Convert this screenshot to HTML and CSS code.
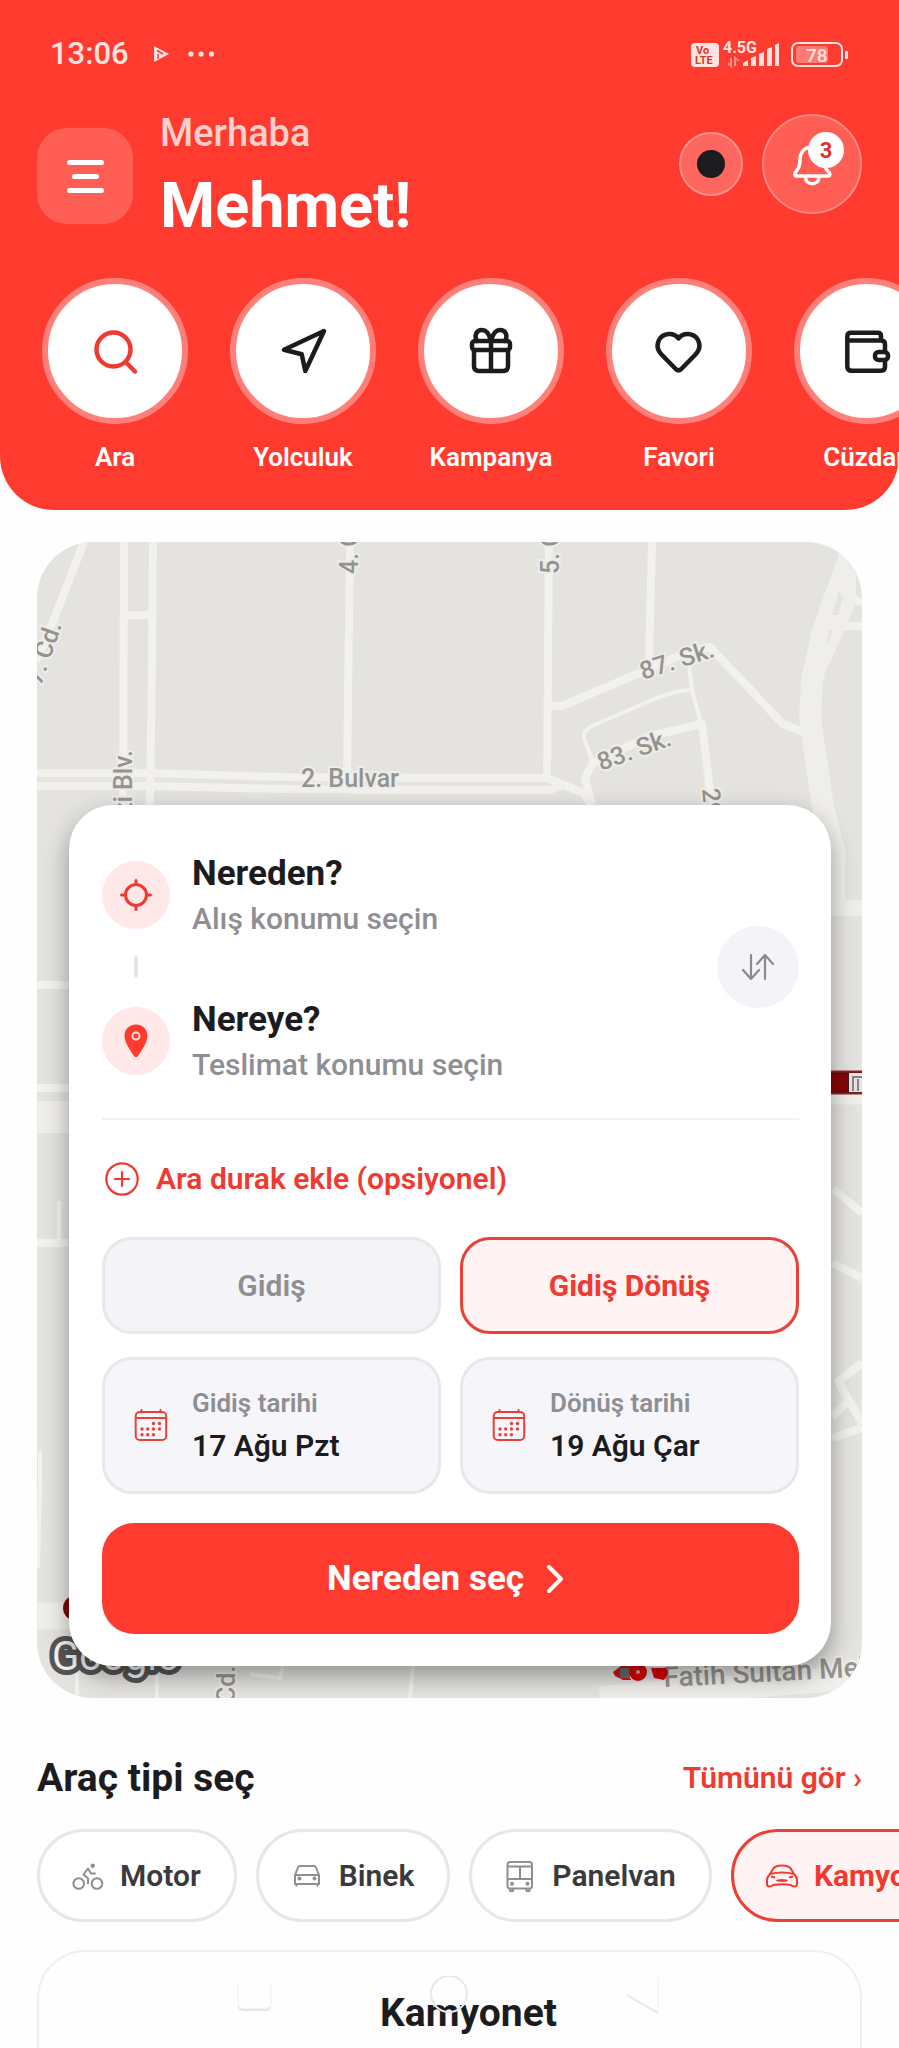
FILE: index.html
```html
<!DOCTYPE html>
<html lang="tr">
<head>
  <meta charset="UTF-8">
  <meta name="viewport" content="width=device-width, initial-scale=1.0">
  <title>Nereden Nereye</title>
  <link rel="stylesheet" href="styles.css">
</head>
<body>
  <header class="header">
    <div class="status-bar">
      <div class="status-left">
        <span class="time">13:06</span>
        <svg width="16" height="18" viewBox="0 0 16 18">
          <path d="M1 1l15 8L1 17z" fill="#ffe3e1"/>
          <path d="M4 5.500l6 3.500M5 9v5" stroke="#ff3b30" stroke-width="1.500"/>
        </svg>
        <svg width="28" height="8" viewBox="0 0 28 8" fill="#ffe3e1">
          <circle cx="4" cy="4" r="2.600"/><circle cx="14" cy="4" r="2.600"/><circle cx="24.500" cy="4" r="2.600"/>
        </svg>
      </div>
      <svg class="status-icons" width="158" height="30" viewBox="691 38 158 30">
        <rect x="691" y="42" width="28" height="24" rx="4" fill="#ffe3e1"/>
        <text x="696" y="53" font-size="11" font-weight="700" fill="#e0352b">Vo</text>
        <text x="695" y="63" font-size="11" font-weight="700" fill="#e0352b">LTE</text>
        <text x="723" y="52" font-size="16" font-weight="700" fill="#ffe3e1">4.5G</text>
        <path d="M731 57v8l-3-3M735 65v-8l4 3" fill="none" stroke="#ff9089" stroke-width="2"/>
        <path d="M743 65v-3l5-3v6zM751 65v-8l5-2v10zM759 65V53l5-2v14zM767 65V48l5-2v19zM775 65V44l4-2v23z" fill="#ffe3e1"/>
        <rect x="792" y="42" width="50" height="23" rx="6" fill="none" stroke="#ffe3e1" stroke-width="2"/>
        <rect x="796" y="45" width="32" height="17" rx="3" fill="#ff7a73"/>
        <text x="806" y="61" font-size="19" font-weight="500" fill="#ffe3e1">78</text>
        <rect x="845" y="50" width="3" height="8" rx="1" fill="#ffe3e1"/>
      </svg>
    </div>

    <div class="top-row">
      <button class="menu-btn" aria-label="Menü"><span></span><span class="short"></span><span></span></button>
      <div class="greeting">
        <p class="hello">Merhaba</p>
        <h1 class="name">Mehmet!</h1>
      </div>
      <div class="top-actions">
        <button class="dot-btn" aria-label="Tema"></button>
        <button class="bell-btn" aria-label="Bildirimler">
          <svg width="44" height="44" viewBox="28 28 44 44" fill="none" stroke="#fff" stroke-width="3.500" stroke-linejoin="round" stroke-linecap="round">
            <path d="M50 33C41 33 38 40 38 46c0 7-2 9-5 13q-1.500 3 2 3h30.500q3.500 0 2-3c-3.500-4-5.500-6-5.500-13 0-6-3-13-12-13z"/>
            <path d="M43.500 63c0 9 13.500 9 13.500 0"/>
          </svg>
          <span class="badge">3</span>
        </button>
      </div>
    </div>

    <nav class="quick">
      <button class="quick-item">
        <span class="quick-icon active">
          <svg viewBox="0 0 48 48"><circle cx="22.500" cy="22.500" r="17"/><path d="M35 35.500l9 9"/></svg>
        </span>
        Ara
      </button>
      <button class="quick-item">
        <span class="quick-icon">
          <svg viewBox="0 0 48 48"><path d="M45 4L5 22.700l17.700 4.600L26.300 44z"/></svg>
        </span>
        Yolculuk
      </button>
      <button class="quick-item">
        <span class="quick-icon">
          <svg viewBox="0 0 48 48"><rect x="5" y="14" width="38" height="9" rx="3"/><path d="M7 24v15q0 5 5 5h24q5 0 5-5V24M24 14v30M24 14C22 6 19 3 15 3c-6 0-8 6-5 11M24 14c2-8 5-11 9-11 6 0 8 6 5 11"/></svg>
        </span>
        Kampanya
      </button>
      <button class="quick-item">
        <span class="quick-icon">
          <svg viewBox="0 0 48 48"><path d="M23.500 11.500C19 5 8 5.500 4 13c-3 6-1 11 3 15l14 14.300q2.500 2.200 5 0L40 28c4-4 6-9 3-15-4-7.500-15-8-19.500-1.500z"/></svg>
        </span>
        Favori
      </button>
      <button class="quick-item">
        <span class="quick-icon">
          <svg viewBox="0 0 48 48"><path d="M38 13V9q0-3.300-3.300-3.300H8Q4.300 5.700 4.300 9.400v30q0 4.300 4.300 4.300H38q4 0 4-4V33M4.300 13.500H38q4 0 4 4V25"/><rect x="32" y="25" width="13" height="8" rx="3.500"/></svg>
        </span>
        Cüzdan
      </button>
    </nav>
  </header>

  <main>
    <section class="map">
      <svg class="map-bg" viewBox="37 541 825 1156" preserveAspectRatio="xMidYMin slice">
        <rect x="37" y="541" width="825" height="1156" fill="#e4e3df"/>
        <!-- roads -->
        <g fill="none" stroke="#f2f1ec" stroke-width="8" stroke-linejoin="round">
          <path d="M84 541L52 623L36 660"/>
          <path d="M124 541L123 804M153 541L152 663L150 804M126 614H152"/>
          <path d="M350 541L347 777M549 541L547 780M652 541L649 663"/>
          <path d="M37 772H150L283 776L450 777H547L583 792L592 804"/>
          <path d="M37 785H150L283 788L450 789H550L562 784"/>
          <path d="M550 705H562L637 673L690 650L710 646L783 723L804 731"/>
          <path d="M592 804L585 777L593 762L650 735L702 723L710 790L715 807"/>
          <path d="M827 625H862M842 592L862 602"/>
          <path d="M833 1188L862 1212M832 1262L862 1277M862 1362L838 1380L862 1422M862 1427L832 1437M832 1416L848 1400"/>
          <path d="M37 984H69M37 1087H69M37 1242H69"/>
        </g>
        <g fill="none" stroke="#f2f1ec" stroke-width="4">
          <path d="M689 663L692 689L701 722M692 689Q670 690 650 700L592 725Q582 730 584 737L593 762"/>
          <path d="M59 1200V1240M40 1450V1480L38 1567M77 1665V1697M157 1665V1697M413 1665L410 1697M250 1673L280 1677L283 1665"/>
        </g>
        <g fill="none" stroke="#efeeea">
          <path d="M855 541L823 630L812 680L810 717L823 807L834 850V905" stroke-width="22"/>
          <path d="M850 570V600L822 665" stroke-width="12"/>
          <path d="M831 907H862" stroke-width="16"/>
          <path d="M831 1090H862M37 1615H75" stroke-width="27"/>
          <path d="M37 1116H69" stroke-width="32"/>
          <path d="M600 1697L862 1676" stroke-width="24"/>
        </g>
        <path d="M839 590l4 6-5 18h-6zM829 628l-2 18 6-16z" fill="#e4e3df"/>
        <!-- street names -->
        <g class="street">
          <text x="301" y="786">2. Bulvar</text>
          <text transform="translate(358 573) rotate(-90)">4. Cd.</text>
          <text transform="translate(559 573) rotate(-90)">5. Cd.</text>
          <text transform="translate(132 749) rotate(-90)" text-anchor="end">Gazi Blv.</text>
          <text transform="translate(62 624) rotate(-71)" text-anchor="end">7. Cd.</text>
          <text transform="translate(643 679) rotate(-18)">87. Sk.</text>
          <text transform="translate(601 770) rotate(-20)">83. Sk.</text>
          <text transform="translate(702 788) rotate(84)">29. Sk.</text>
          <text transform="translate(235 1702) rotate(-90)">Cd.</text>
          <text transform="translate(664 1686) rotate(-3)" font-size="28">Fatih Sultan Mehmet</text>
        </g>
        <!-- vehicles -->
        <g>
          <rect x="825" y="1070" width="37" height="23" fill="#3b1d1c"/>
          <rect x="828" y="1073" width="20" height="17" fill="#850508"/>
          <rect x="849" y="1072" width="13" height="19" fill="#e6e3e2"/>
          <path d="M862 1076H853V1090M858 1078V1090" fill="none" stroke="#8a8585" stroke-width="2"/>
          <path d="M831 1070.500H862M831 1092.500H862" stroke="#9c1c20" stroke-width="2"/>
          <ellipse cx="72" cy="1607" rx="9" ry="11" fill="#7d0307"/>
          <path d="M613 1671l8-6h10v14h-8l-8-4z" fill="#cf1516"/>
          <path d="M620 1667h10v10h-10z" fill="#6b6b6b"/>
          <rect x="630" y="1667" width="25" height="11" fill="#dcdada"/>
          <circle cx="638" cy="1671" r="9" fill="#d80306"/>
          <circle cx="638" cy="1671" r="2" fill="#f3a0a0"/>
          <path d="M651 1667h15q4 5-2 12l-10-2z" fill="#d80306"/>
        </g>
        <text class="google" x="52" y="1669">Google</text>
      </svg>

      <div class="trip-card">
        <div class="route">
          <button class="stop">
            <span class="stop-icon">
              <svg width="34" height="34" viewBox="0 0 34 34" fill="none" stroke="#f03a31" stroke-width="3" stroke-linecap="round">
                <circle cx="17" cy="17" r="10.500"/><path d="M17 2.500v4M17 27.500v4M2.500 17h4M27.500 17h4"/>
              </svg>
            </span>
            <span class="stop-text"><b>Nereden?</b><span>Alış konumu seçin</span></span>
          </button>
          <div class="connector"></div>
          <button class="stop">
            <span class="stop-icon">
              <svg width="24" height="34" viewBox="0 0 24 34">
                <path d="M12 0.500C5 0.500 0.500 5.500 0.500 12 0.500 18 6 26 10 32q2 2.500 4 0c4-6 9.500-14 9.500-20C23.500 5.500 19 0.500 12 0.500z" fill="#ff3b30"/>
                <circle cx="12" cy="12" r="3.500" fill="none" stroke="#ffe0de" stroke-width="2"/>
              </svg>
            </span>
            <span class="stop-text"><b>Nereye?</b><span>Teslimat konumu seçin</span></span>
          </button>
          <button class="swap-btn" aria-label="Değiştir">
            <svg width="34" height="28" viewBox="0 0 34 28" fill="none" stroke="#8a8a8e" stroke-width="2.200" stroke-linecap="round" stroke-linejoin="round">
              <path d="M10 2v24M2 17l8 9 8-9M24 26V2M16 11l8-9 8 9"/>
            </svg>
          </button>
        </div>

        <button class="add-stop">
          <svg width="34" height="34" viewBox="0 0 34 34" fill="none" stroke="#f03a31" stroke-width="2.200" stroke-linecap="round">
            <circle cx="17" cy="17" r="15.700"/><path d="M17 10v14M10 17h14"/>
          </svg>
          Ara durak ekle (opsiyonel)
        </button>

        <div class="two-col trip-type">
          <button class="type-btn">Gidiş</button>
          <button class="type-btn selected">Gidiş Dönüş</button>
        </div>

        <div class="two-col dates">
          <button class="date-btn">
            <svg class="calendar" viewBox="0 0 34 34"><rect x="1.700" y="3" width="30.500" height="28" rx="4"/><path d="M2 9H32M7.500 1v2M26.500 1v2"/><g class="dots"><circle cx="19.500" cy="14.500" r="1.700"/><circle cx="25.500" cy="14.500" r="1.700"/><circle cx="8" cy="20" r="1.700"/><circle cx="13.700" cy="20" r="1.700"/><circle cx="19.500" cy="20" r="1.700"/><circle cx="25.500" cy="20" r="1.700"/><circle cx="8" cy="25.700" r="1.700"/><circle cx="13.700" cy="25.700" r="1.700"/><circle cx="19.500" cy="25.700" r="1.700"/></g></svg>
            <span class="date-text"><span>Gidiş tarihi</span><b>17 Ağu Pzt</b></span>
          </button>
          <button class="date-btn">
            <svg class="calendar" viewBox="0 0 34 34"><rect x="1.700" y="3" width="30.500" height="28" rx="4"/><path d="M2 9H32M7.500 1v2M26.500 1v2"/><g class="dots"><circle cx="19.500" cy="14.500" r="1.700"/><circle cx="25.500" cy="14.500" r="1.700"/><circle cx="8" cy="20" r="1.700"/><circle cx="13.700" cy="20" r="1.700"/><circle cx="19.500" cy="20" r="1.700"/><circle cx="25.500" cy="20" r="1.700"/><circle cx="8" cy="25.700" r="1.700"/><circle cx="13.700" cy="25.700" r="1.700"/><circle cx="19.500" cy="25.700" r="1.700"/></g></svg>
            <span class="date-text"><span>Dönüş tarihi</span><b>19 Ağu Çar</b></span>
          </button>
        </div>

        <button class="cta">
          Nereden seç
          <svg width="28" height="30" viewBox="0 0 28 30" fill="none" stroke="#fff" stroke-width="4" stroke-linecap="round" stroke-linejoin="round"><path d="M3 3l12 12L3 27"/></svg>
        </button>
      </div>
    </section>

    <div class="section-head">
      <h2>Araç tipi seç</h2>
      <a href="#">Tümünü gör ›</a>
    </div>

    <div class="chips">
      <button class="chip">
        <svg viewBox="0 0 32 32"><circle cx="6.700" cy="23.500" r="5.300"/><circle cx="25" cy="23.500" r="5.300"/><path d="M23.700 13.500H19l-3-5-4.500 6 4.500 4v5.500"/><circle class="fill" cx="20.700" cy="5.700" r="2.200"/></svg>
        Motor
      </button>
      <button class="chip">
        <svg viewBox="0 0 32 32"><path d="M4 15l3-7.500q.5-1.500 2-1.500h14q1.500 0 2 1.500L28 15M4 15h24v9H4zM5.500 24v2.500M26.500 24v2.500"/><circle class="fill" cx="8.500" cy="18.500" r="2"/><circle class="fill" cx="23.500" cy="18.500" r="2"/></svg>
        Binek
      </button>
      <button class="chip">
        <svg viewBox="0 0 32 32"><rect x="3.500" y="2" width="24.500" height="26.500" rx="2.500"/><path d="M4 6.500h24M4 19h24M16 7v12M6 29v2h3v-2M22.500 29v2h3v-2"/><circle class="fill" cx="8" cy="23.700" r="2"/><circle class="fill" cx="23.500" cy="23.700" r="2"/></svg>
        Panelvan
      </button>
      <button class="chip selected">
        <svg viewBox="0 0 32 32"><path d="M4 14l3-5q2-3.500 9-3.500T25 9l3 5M4 14q-3 3-3 6v4q0 2.500 2.500 2.500T7 25q9-1.500 18 0 1 1.500 3.500 1.500T31 24v-4q0-3-3-6-12-3-24 0zM5 16.500l4 1M27 16.500l-4 1"/><ellipse class="fill" cx="16" cy="20.500" rx="6" ry="1.500"/></svg>
        Kamyonet
      </button>
    </div>

    <section class="vehicle-card">
      <h2>Kamyonet</h2>
    </section>
  </main>

  <!-- system navigation -->
  <svg class="system-nav" viewBox="0 0 430 40" fill="none" stroke="#e6e6e6" stroke-width="2">
    <path d="M2 8V28q0 5 5 5h23q5 0 5-5V8" stroke="#f6f6f6"/>
    <path d="M3 31q1 3 4 3h23q3 0 4-3"/>
    <circle cx="213" cy="18" r="18" stroke="#e8e8e8"/>
    <path d="M422 2V38" stroke="#f7f7f7"/>
    <path d="M391 19L422 37"/>
  </svg>
</body>
</html>
```
FILE: styles.css
```css
* {
  box-sizing: border-box;
}
body {
  display: flex;
  flex-direction: column;
  min-height: 100vh;
  margin: 0;
  overflow-x: hidden;
  background: #fefefe;
  color: #1c1c1e;
  font-family: Roboto, "Liberation Sans", sans-serif;
}
h1, h2, p {
  margin: 0;
}
button {
  margin: 0;
  padding: 0;
  border: none;
  background: none;
  color: inherit;
  font-family: inherit;
  cursor: pointer;
}
svg {
  flex-shrink: 0;
}
main {
  display: flex;
  flex-direction: column;
  flex: 1;
}

/* header */
.header {
  padding: 0 0 37px;
  overflow: hidden;
  background: #ff3b30;
  color: #fff;
  border-radius: 0 0 54px 54px;
}
.status-bar {
  display: flex;
  justify-content: space-between;
  align-items: center;
  height: 108px;
  padding: 0 50px;
}
.status-left {
  display: flex;
  align-items: center;
}
.time {
  margin-right: 24px;
  color: #ffe3e1;
  font-size: 31px;
  font-weight: 500;
  line-height: 38px;
}
.status-left svg + svg {
  margin-left: 18px;
}
.top-row {
  display: flex;
  align-items: center;
  margin-top: 2px;
  padding: 0 37px;
}
.menu-btn {
  display: flex;
  flex-direction: column;
  align-items: center;
  justify-content: center;
  gap: 9px;
  width: 96px;
  height: 96px;
  border-radius: 30px;
  background: rgba(255, 255, 255, 0.18);
}
.menu-btn span {
  width: 37px;
  height: 5px;
  border-radius: 3px;
  background: #fff;
}
.menu-btn .short {
  width: 27px;
}
.greeting {
  flex: 1;
  margin-left: 27px;
}
.hello {
  margin-bottom: 14px;
  color: #ffcfcc;
  font-size: 38px;
  font-weight: 500;
  line-height: 46px;
}
.name {
  font-size: 63px;
  font-weight: 700;
  line-height: 72px;
}
.top-actions {
  display: flex;
  align-items: center;
  align-self: flex-start;
  gap: 19px;
  margin-top: 4px;
}
.dot-btn {
  display: flex;
  align-items: center;
  justify-content: center;
  width: 64px;
  height: 64px;
  border: 2px solid #ff9089;
  border-radius: 50%;
  background: #ff665f;
}
.dot-btn::after {
  content: "";
  width: 28px;
  height: 28px;
  border-radius: 50%;
  background: #1c1c1e;
}
.bell-btn {
  position: relative;
  display: flex;
  align-items: center;
  justify-content: center;
  width: 100px;
  height: 100px;
  border: 2px solid #ff8882;
  border-radius: 50%;
  background: #ff5e55;
}
.badge {
  position: absolute;
  top: 16px;
  right: 16px;
  width: 36px;
  height: 36px;
  border-radius: 50%;
  background: #fff;
  color: #d9342b;
  font-size: 22px;
  font-weight: 700;
  line-height: 38px;
  text-align: center;
}
.quick {
  display: flex;
  gap: 32px;
  margin-top: 36px;
  padding: 0 37px;
  overflow: hidden;
}
.quick-item {
  display: flex;
  flex-direction: column;
  align-items: center;
  flex: 0 0 156px;
  gap: 17px;
  font-size: 26px;
  font-weight: 600;
  line-height: 32px;
}
.quick-icon {
  display: flex;
  align-items: center;
  justify-content: center;
  width: 146px;
  height: 146px;
  border: 6px solid #ff7f79;
  border-radius: 50%;
  background: #fff;
  color: #1c1c1e;
}
.quick-icon.active {
  color: #f03a31;
}
.quick-icon svg {
  width: 48px;
  height: 48px;
  fill: none;
  stroke: currentColor;
  stroke-width: 4.5;
  stroke-linecap: round;
  stroke-linejoin: round;
}

/* map */
.map {
  position: relative;
  margin: 32px 37px 0;
  padding: 263px 31px 32px 32px;
  overflow: hidden;
  border-radius: 56px;
}
.map-bg {
  position: absolute;
  top: 0;
  left: 0;
  width: 100%;
  height: 100%;
}
.street {
  fill: #94938f;
  stroke: #eeede9;
  stroke-width: 4px;
  paint-order: stroke;
  font-size: 25px;
  font-weight: 500;
}
.google {
  fill: #f4f4f4;
  stroke: #555;
  stroke-width: 10px;
  stroke-linejoin: round;
  paint-order: stroke;
  font-size: 40px;
}
.trip-card {
  position: relative;
  padding: 46px 32px 32px 33px;
  border-radius: 44px;
  background: #fff;
  box-shadow: 0 10px 24px rgba(0, 0, 0, 0.36);
}
.route {
  position: relative;
  padding-bottom: 34px;
  border-bottom: 2px solid #f2f2f4;
}
.stop {
  display: flex;
  align-items: center;
  gap: 22px;
  text-align: left;
}
.stop-icon {
  display: flex;
  align-items: center;
  justify-content: center;
  width: 68px;
  height: 68px;
  border-radius: 50%;
  background: #ffe8e7;
}
.stop-text {
  display: flex;
  flex-direction: column;
  gap: 3px;
  color: #8e8e93;
  font-size: 30px;
  font-weight: 500;
  line-height: 38px;
}
.stop-text b {
  color: #1c1c1e;
  font-size: 35px;
  font-weight: 700;
  line-height: 46px;
}
.connector {
  width: 4px;
  height: 22px;
  margin: 18px 0 19px 32px;
  border-radius: 2px;
  background: #e5e5ea;
}
.swap-btn {
  position: absolute;
  top: 75px;
  right: 0;
  display: flex;
  align-items: center;
  justify-content: center;
  width: 82px;
  height: 82px;
  border-radius: 50%;
  background: #f4f4f8;
}
.add-stop {
  display: flex;
  align-items: center;
  gap: 17px;
  margin: 40px 0 39px;
  padding-left: 3px;
  color: #f03a31;
  font-size: 30px;
  font-weight: 600;
  line-height: 38px;
}
.two-col {
  display: grid;
  grid-template-columns: 1fr 1fr;
  gap: 19px;
}
.type-btn {
  height: 97px;
  border: 3px solid #e7e7ec;
  border-radius: 30px;
  background: #f4f4f8;
  color: #8e8e93;
  font-size: 30px;
  font-weight: 600;
}
.type-btn.selected {
  border-color: #ea4038;
  background: #fff4f3;
  color: #f03a31;
  font-weight: 700;
}
.dates {
  margin: 23px 0 29px;
}
.date-btn {
  display: flex;
  align-items: center;
  gap: 24px;
  height: 137px;
  padding-left: 29px;
  border: 3px solid #e7e7ec;
  border-radius: 30px;
  background: #f6f6fa;
  text-align: left;
}
.calendar {
  width: 34px;
  height: 34px;
  fill: none;
  stroke: #ea4038;
  stroke-width: 2;
  stroke-linecap: round;
}
.calendar .dots {
  fill: #ea4038;
  stroke: none;
}
.date-text {
  display: flex;
  flex-direction: column;
  gap: 8px;
  color: #8e8e93;
  font-size: 26px;
  font-weight: 600;
  line-height: 32px;
}
.date-text b {
  color: #1c1c1e;
  font-size: 30px;
  font-weight: 600;
  line-height: 38px;
}
.cta {
  display: flex;
  align-items: center;
  justify-content: center;
  gap: 22px;
  width: 100%;
  height: 111px;
  border-radius: 32px;
  background: #ff3b30;
  color: #fff;
  font-size: 35px;
  font-weight: 700;
}

/* vehicle types */
.section-head {
  display: flex;
  justify-content: space-between;
  align-items: center;
  margin: 57px 37px 28px;
}
.section-head h2 {
  font-size: 39px;
  line-height: 46px;
}
.section-head a {
  color: #f03a31;
  font-size: 30px;
  font-weight: 600;
  line-height: 38px;
  text-decoration: none;
}
.chips {
  display: flex;
  gap: 19px;
  padding: 0 37px;
  overflow: hidden;
}
.chip {
  display: flex;
  align-items: center;
  flex-shrink: 0;
  gap: 16px;
  height: 93px;
  padding: 0 33px 0 32px;
  border: 3px solid #e7e7ea;
  border-radius: 47px;
  background: #fff;
  color: #3a3a3c;
  font-size: 30px;
  font-weight: 600;
}
.chip svg {
  width: 32px;
  height: 32px;
  fill: none;
  stroke: #8e8e93;
  stroke-width: 2;
  stroke-linejoin: round;
}
.chip .fill {
  fill: #8e8e93;
  stroke: none;
}
.chip.selected {
  border-color: #ea4038;
  background: #fff4f3;
  color: #f03a31;
  font-weight: 700;
}
.chip.selected svg {
  stroke: #f03a31;
}
.chip.selected .fill {
  fill: #f03a31;
}
.vehicle-card {
  flex: 1;
  margin: 28px 37px 0;
  padding: 38px 0 0 38px;
  border: 2px solid #f0f0f0;
  border-bottom: none;
  border-radius: 48px 48px 0 0;
  text-align: center;
}
.vehicle-card h2 {
  font-size: 39px;
  line-height: 46px;
}
.system-nav {
  position: fixed;
  bottom: 32px;
  left: 50%;
  width: 430px;
  height: 40px;
  margin-left: -214px;
}
```
